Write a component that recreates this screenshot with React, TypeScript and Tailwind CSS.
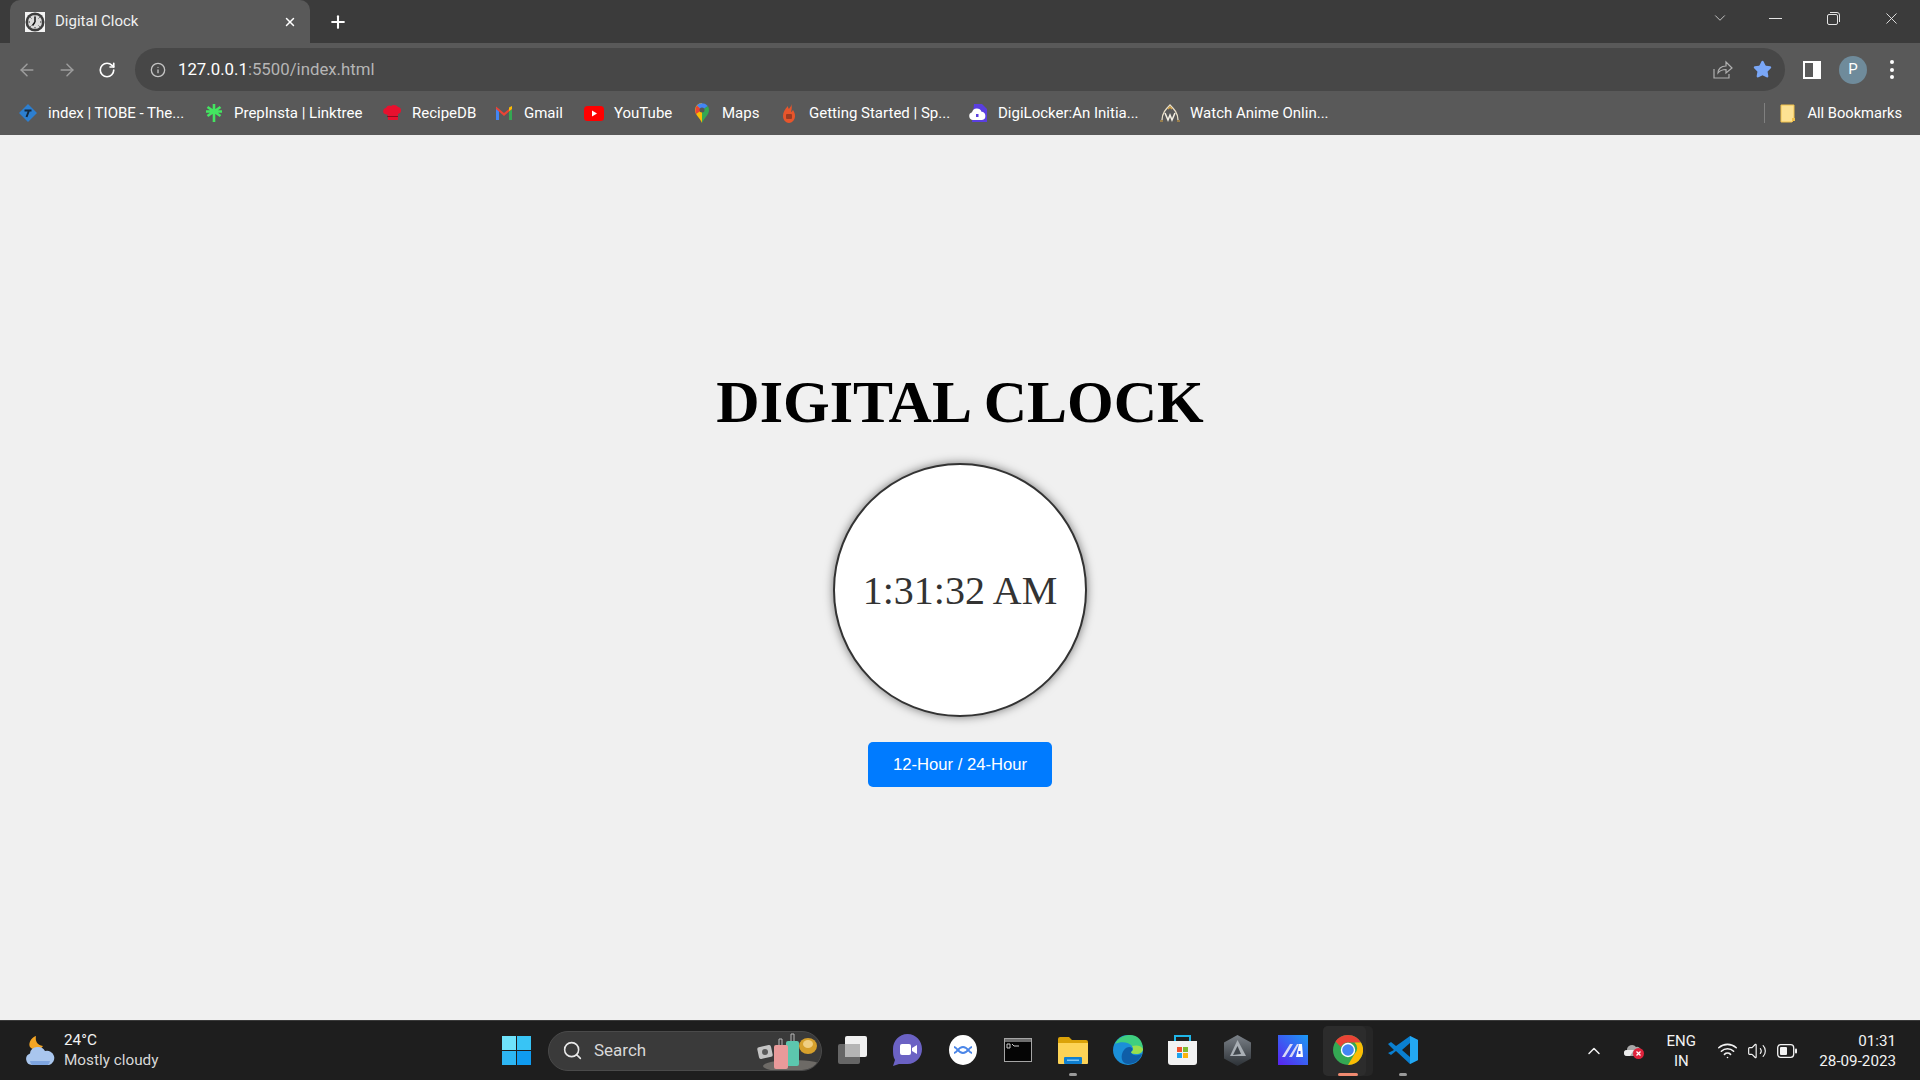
import React, { useState } from 'react';
import { ArrowLeft, ArrowRight, ChevronDown, ChevronUp, Info, Plus, RotateCw, Search, Star, Volume2, Wifi, X } from 'lucide-react';

const uiFont = "font-['Roboto',sans-serif]";

function Favicon() {
  return (
    <svg width="20" height="20" viewBox="0 0 20 20">
      <rect width="20" height="20" fill="#f4f4f4" />
      <circle cx="10" cy="10" r="9.500" fill="#3d3d3d" />
      <circle cx="10" cy="10" r="7" fill="#dcdcdc" />
      <path d="M10 10V5M10 10l-2.500 3.500" stroke="#111" strokeWidth="1.500" fill="none" />
      <path d="M10 3.500v1.500M10 15v1.500M3.500 10H5M15 10h1.500M5.400 5.400l1 1M13.600 13.600l1 1M14.600 5.400l-1 1M6.400 13.600l-1 1" stroke="#333" strokeWidth="1" />
    </svg>
  );
}

function TiobeIcon() {
  return (
    <svg width="20" height="20" viewBox="0 0 20 20">
      <path d="M10 1l9 9-9 9-9-9z" fill="#2d7fd0" />
      <path d="M6.500 7.500h7M11 7.500L8.500 14" stroke="#13283e" strokeWidth="2" fill="none" />
    </svg>
  );
}

function LinktreeIcon() {
  return (
    <svg width="18" height="20" viewBox="0 0 18 20">
      <path d="M9 1v18M2.500 4l13 9M15.500 4l-13 9M1 8.500h16" stroke="#43e660" strokeWidth="2.600" fill="none" />
    </svg>
  );
}

function RecipeIcon() {
  return (
    <svg width="20" height="18" viewBox="0 0 20 18">
      <path d="M4 4c1-3 4-3 5-2 2-2 6-1 7 1 3 0 4 4 2 6l-2 1v6H6v-5L3 10C0 9 1 4 4 4z" fill="#e8102e" />
      <path d="M5 12.500h11" stroke="#8d0a1e" strokeWidth="1" />
    </svg>
  );
}

function GmailIcon() {
  return (
    <svg width="18" height="16" viewBox="0 0 18 16">
      <path d="M1 3v12h3V6z" fill="#4285f4" />
      <path d="M14 6v9h3V3z" fill="#34a853" />
      <path d="M1 1.500L9 8l8-6.500V4l-8 7-8-7z" fill="#ea4335" />
      <path d="M14 2.500L17 1v3l-3 2z" fill="#fbbc04" />
    </svg>
  );
}

function YoutubeIcon() {
  return (
    <svg width="20" height="15" viewBox="0 0 20 15">
      <rect width="20" height="15" rx="3.500" fill="#f00" />
      <path d="M8 4.500l5 3-5 3z" fill="#fff" />
    </svg>
  );
}

function MapsIcon() {
  return (
    <svg width="14" height="20" viewBox="0 0 14 20">
      <path d="M7 20C5 15 0 12 0 7a7 7 0 0 1 7-7z" fill="#fbbc04" />
      <path d="M7 20c2-5 7-8 7-13 0-1.500-.5-3-1.300-4L7 7z" fill="#34a853" />
      <path d="M2 2.500L7 7 1 11C0 9 0 5 2 2.500z" fill="#ea4335" />
      <path d="M2 2.500C4 0 9-1 12.700 3L7 7z" fill="#4285f4" />
      <circle cx="7" cy="7" r="2.500" fill="#555" />
    </svg>
  );
}

function FireIcon() {
  return (
    <svg width="14" height="20" viewBox="0 0 14 20">
      <path d="M9 0c1 3-1 4-2 6C6 5 6 4 6 3 3 6 1 9 1 13c0 4 3 7 6 7s6-3 6-7c0-3-1-4-2-6-1 1-1 2-2 2 1-3 1-6 0-9z" fill="#e8552b" />
      <rect x="4" y="11" width="6" height="5" rx="1" fill="#9c3b22" />
    </svg>
  );
}

function DigiLockerIcon() {
  return (
    <svg width="20" height="20" viewBox="0 0 20 20">
      <path d="M6 1h8l5 5v13H4z" fill="#5a3fe0" />
      <path d="M5 17a4 4 0 0 1-1-7.800 5 5 0 0 1 9.500-.5A4.200 4.200 0 0 1 14 17z" fill="#fff" />
      <rect x="8" y="11" width="2.500" height="3" fill="#5a3fe0" />
    </svg>
  );
}

function AnimeIcon() {
  return (
    <svg width="20" height="20" viewBox="0 0 20 20" fill="none">
      <path d="M2 17C2 10 6 6 10 2c4 4 8 8 8 15" stroke="#e9dfc8" strokeWidth="1.300" />
      <path d="M5 10l3 7 2-5 2 5 3-7" stroke="#f4f0e4" strokeWidth="1.500" />
      <path d="M8 6l2-2 2 2" stroke="#d9a441" strokeWidth="1.300" />
      <path d="M0 18h3M17 18h3" stroke="#d9a441" strokeWidth="1" />
    </svg>
  );
}

function BookmarkFolder() {
  return (
    <svg width="16" height="19" viewBox="0 0 16 19">
      <path d="M1 1h13v15l-2 2H1z" fill="#fde293" stroke="#f0c14b" strokeWidth="1" />
      <path d="M12 14h3v3h-3z" fill="#f0c14b" />
    </svg>
  );
}

function ShareIcon() {
  return (
    <svg width="20" height="19" viewBox="0 0 20 19" fill="none" stroke="#b0b0b0" strokeWidth="1.200">
      <path d="M1 9v9h15v-4" />
      <path d="M5 13c0-4 3-7 8-7V2l6 6-6 5V9.500c-3 0-6 1-8 3.500z" />
    </svg>
  );
}

function SidePanelIcon() {
  return (
    <svg width="18" height="18" viewBox="0 0 18 18">
      <rect width="18" height="18" fill="#fff" />
      <rect x="2" y="2" width="8" height="14" fill="#595959" />
    </svg>
  );
}

function RestoreIcon() {
  return (
    <svg width="13" height="13" viewBox="0 0 13 13" fill="none" stroke="#e4e4e4" strokeWidth="1">
      <rect x="0.500" y="2.500" width="10" height="10" rx="1.500" />
      <path d="M3 .5h7a2.500 2.500 0 0 1 2.500 2.500v7" />
    </svg>
  );
}

function WeatherIcon() {
  return (
    <svg width="30" height="30" viewBox="0 0 30 30">
      <path d="M11 0c-1 5 1 9 7 10-2 4-8 5-12 2C2 9 6 1 11 0z" fill="#f4a524" />
      <path d="M7 29a6 6 0 0 1-2-11.600 7 7 0 0 1 7-6.400 8 8 0 0 1 8 4 7 7 0 0 1 4 14z" fill="#a9c6ee" />
      <path d="M5 25h20a7 7 0 0 1-2 4H7a6 6 0 0 1-2-4z" fill="#7ea5e0" />
    </svg>
  );
}

function StartIcon() {
  return (
    <svg width="29" height="29" viewBox="0 0 29 29">
      <rect width="14" height="14" fill="#6fe3fb" />
      <rect x="15" width="14" height="14" fill="#38c4f5" />
      <rect y="15" width="14" height="14" fill="#2db6f4" />
      <rect x="15" y="15" width="14" height="14" fill="#0f9bf0" />
    </svg>
  );
}

function SearchArt() {
  return (
    <svg width="64" height="40" viewBox="0 0 64 40">
      <ellipse cx="36" cy="35" rx="30" ry="6" fill="#6d6a66" />
      <rect x="1" y="15" width="14" height="12" rx="2" fill="#c4c4c4" transform="rotate(-12 8 21)" />
      <circle cx="8" cy="21" r="3" fill="#5a5a5a" />
      <path d="M22 15V8h3v7M34 11V3h3v8" fill="none" stroke="#b8b8b8" strokeWidth="1" />
      <rect x="29" y="10" width="13" height="25" rx="2" fill="#5cc7ae" />
      <rect x="17" y="14" width="14" height="24" rx="2" fill="#e99a9a" />
      <ellipse cx="51" cy="15" rx="9" ry="8" fill="#d6a02c" />
      <ellipse cx="51" cy="13" rx="5" ry="4" fill="#f0cf82" />
    </svg>
  );
}

function TaskViewIcon() {
  return (
    <svg width="30" height="28" viewBox="0 0 30 28">
      <rect x="0" y="8" width="22" height="20" rx="2" fill="#666" />
      <rect x="7" y="0" width="22" height="21" rx="2" fill="#f0f0f0" />
      <rect x="7" y="8" width="15" height="13" fill="#b5b5b5" />
    </svg>
  );
}

function MeetIcon() {
  return (
    <svg width="29" height="32" viewBox="0 0 29 32">
      <path d="M14.500 0C23 0 29 7 29 15s-6 15-14.500 15H6l-6 2 2-6C0 23 0 19 0 15 0 7 6 0 14.500 0z" fill="#6b62c4" />
      <rect x="7" y="10" width="11" height="11" rx="2" fill="#fff" />
      <path d="M19 14l5-3v9l-5-3z" fill="#fff" />
    </svg>
  );
}

function CircleWaveIcon() {
  return (
    <svg width="28" height="30" viewBox="0 0 28 30" fill="none">
      <ellipse cx="14" cy="15" rx="14" ry="15" fill="#fff" />
      <path d="M5 12c3 0 4 6 9 6s6-6 9-6M5 18c3 0 4-6 9-6s6 6 9 6" stroke="#4b86e8" strokeWidth="1.800" />
    </svg>
  );
}

function TerminalIcon() {
  return (
    <svg width="28" height="24" viewBox="0 0 28 24">
      <rect width="28" height="24" fill="#a5a5a5" />
      <rect x="1" y="1" width="26" height="3" fill="#6e6e6e" />
      <rect x="1" y="4" width="26" height="19" fill="#050505" />
      <path d="M3 6h3v4H3zM8 6l2 2h5" stroke="#ccc" strokeWidth="1" fill="none" />
    </svg>
  );
}

function FolderIcon() {
  return (
    <svg width="30" height="27" viewBox="0 0 30 27">
      <path d="M0 2a2 2 0 0 1 2-2h9l3 3h14a2 2 0 0 1 2 2v6H0z" fill="#dba208" />
      <path d="M0 6h30v20a1 1 0 0 1-1 1H1a1 1 0 0 1-1-1z" fill="#fdd356" />
      <rect x="6" y="20" width="18" height="7" rx="1" fill="#0f7fd0" />
      <rect x="9" y="22.500" width="12" height="1.500" fill="#7cc5f5" />
    </svg>
  );
}

function EdgeIcon() {
  return (
    <svg width="30" height="30" viewBox="0 0 30 30">
      <circle cx="15" cy="15" r="15" fill="#1b8fd8" />
      <path d="M2 9C5 2 12 0 17 0c8 0 13 6 13 14 0 3-3 5-7 5-3 0-5-1-5-2 2-1 3-3 1-6C16 7 8 6 2 9z" fill="#3fcf7f" />
      <path d="M15 29C8 29 7 20 11 15c2-3 6-4 8-2 1 2 0 4-1 4 0 2 4 4 7 3 2 0 3-1 4-1-2 6-7 10-14 10z" fill="#0f5ea8" />
      <path d="M30 14c0 3-3 5-7 5-3 0-5-1-5-2 2-1 3-3 1-6 4-1 9-1 11 3z" fill="#9ade4e" />
    </svg>
  );
}

function StoreIcon() {
  return (
    <svg width="29" height="30" viewBox="0 0 29 30">
      <path d="M7 6V1h15v5" fill="none" stroke="#1fb6e8" strokeWidth="2" />
      <path d="M0 6h29v21a3 3 0 0 1-3 3H3a3 3 0 0 1-3-3z" fill="#f2f2f2" />
      <rect x="9" y="12" width="5" height="5" fill="#f0532d" />
      <rect x="15" y="12" width="5" height="5" fill="#7fbb2e" />
      <rect x="9" y="18" width="5" height="5" fill="#1ea4ee" />
      <rect x="15" y="18" width="5" height="5" fill="#fbb40d" />
    </svg>
  );
}

function HexIcon() {
  return (
    <svg width="27" height="31" viewBox="0 0 27 31">
      <defs>
        <linearGradient id="hexFill" x1="0" y1="0" x2="0" y2="1">
          <stop offset="0" stopColor="#7b8188" />
          <stop offset="1" stopColor="#2c3136" />
        </linearGradient>
      </defs>
      <path d="M13.500 0L27 7.500v16L13.500 31 0 23.500v-16z" fill="url(#hexFill)" />
      <path d="M13.500 5L22 21H6z" fill="#a9afb5" />
      <path d="M13.500 11L17 19l-8 1z" fill="#41474d" />
    </svg>
  );
}

function BlueAppIcon() {
  return (
    <svg width="30" height="30" viewBox="0 0 30 30">
      <defs>
        <linearGradient id="blueApp" x1="1" y1="0" x2="0" y2="1">
          <stop offset="0" stopColor="#1a9bf5" />
          <stop offset="1" stopColor="#5a22ef" />
        </linearGradient>
      </defs>
      <rect width="30" height="30" fill="url(#blueApp)" />
      <path d="M4 22L12 9h3L7 22zM11 22L19 9h2L14 22z" fill="#d8d8f5" />
      <path d="M21 9h3l1 13h-7z" fill="#fff" />
      <rect x="20.500" y="16" width="2" height="3" fill="#3a4ff0" />
    </svg>
  );
}

function ChromeIcon() {
  return (
    <svg width="30" height="30" viewBox="0 0 30 30">
      <circle cx="15" cy="15" r="15" fill="#34a853" />
      <path d="M15 0a15 15 0 0 1 13 7.500H15a7.500 7.500 0 0 0-7 4.500L2.500 6.500A15 15 0 0 1 15 0z" fill="#ea4335" />
      <path d="M28 7.500A15 15 0 0 1 15 30l6.500-11a7.500 7.500 0 0 0 0-11.500z" fill="#fbbc04" />
      <circle cx="15" cy="15" r="7.200" fill="#fff" />
      <circle cx="15" cy="15" r="5.800" fill="#4285f4" />
    </svg>
  );
}

function VsCodeIcon() {
  return (
    <svg width="30" height="30" viewBox="0 0 30 30">
      <path d="M22 1l8 4v20l-8 4L8 16l-5 4-3-2 6-3-6-6 3-2 5 4z" fill="#0a7fd0" />
      <path d="M22 1l8 4v20l-8 4z" fill="#23a8f2" />
      <path d="M22 8l-8 7 8 7z" fill="#1e1e1e" />
    </svg>
  );
}

function OneDriveOff() {
  return (
    <svg width="20" height="16" viewBox="0 0 20 16">
      <path d="M3 13a3 3 0 0 1 0-6 5 5 0 0 1 9-3 4 4 0 0 1 5 4v5z" fill="#a8a8a8" />
      <path d="M3 13a3 3 0 0 1 0-6h7l-4 6z" fill="#ececec" />
      <circle cx="14.500" cy="10.500" r="5.500" fill="#e0233c" />
      <path d="M12.500 8.500l4 4M16.500 8.500l-4 4" stroke="#fff" strokeWidth="1.300" />
    </svg>
  );
}

function BatteryIcon() {
  return (
    <svg width="20" height="14" viewBox="0 0 20 14">
      <rect x="0.700" y="0.700" width="16" height="12.600" rx="3" fill="none" stroke="#f2f2f2" strokeWidth="1.300" />
      <rect x="3" y="3" width="7" height="8" rx="1" fill="#f2f2f2" />
      <rect x="18" y="4.500" width="2" height="5" rx="1" fill="#f2f2f2" />
    </svg>
  );
}

const bookmarks = [
  { icon: <TiobeIcon />, label: 'index | TIOBE - The...', w: 'w-[156px]' },
  { icon: <LinktreeIcon />, label: 'PrepInsta | Linktree', w: 'w-[148px]' },
  { icon: <RecipeIcon />, label: 'RecipeDB', w: 'w-[82px]' },
  { icon: <GmailIcon />, label: 'Gmail', w: 'w-[60px]' },
  { icon: <YoutubeIcon />, label: 'YouTube', w: 'w-[78px]' },
  { icon: <MapsIcon />, label: 'Maps', w: 'w-[57px]' },
  { icon: <FireIcon />, label: 'Getting Started | Sp...', w: 'w-[159px]' },
  { icon: <DigiLockerIcon />, label: 'DigiLocker:An Initia...', w: 'w-[162px]' },
  { icon: <AnimeIcon />, label: 'Watch Anime Onlin...', w: 'w-[150px]' },
];

const taskIcons = [
  { icon: <TaskViewIcon /> },
  { icon: <MeetIcon /> },
  { icon: <CircleWaveIcon /> },
  { icon: <TerminalIcon /> },
  { icon: <FolderIcon />, dot: 'w-[8px] bg-[#9a9a9a]' },
  { icon: <EdgeIcon /> },
  { icon: <StoreIcon /> },
  { icon: <HexIcon /> },
  { icon: <BlueAppIcon /> },
  { icon: <ChromeIcon />, dot: 'w-[20px] bg-[#f08a70]', active: true },
  { icon: <VsCodeIcon />, dot: 'w-[8px] bg-[#9a9a9a]' },
];

function TabStrip() {
  return (
    <div className="flex h-[43px] items-end bg-[#3b3b3b]">
      <div className="ml-[10px] flex h-[43px] w-[300px] items-center rounded-t-[10px] bg-[#595959] pl-[15px] pr-[13px]">
        <Favicon />
        <span className="ml-[10px] text-[15px] text-[#f0f0f0]">Digital Clock</span>
        <X className="ml-auto text-white" size={14} strokeWidth={2.500} />
      </div>
      <div className="ml-[18px] flex h-[43px] items-center">
        <Plus className="text-white" size={20} strokeWidth={2.500} />
      </div>
      <div className="ml-auto flex h-[43px] items-center pb-[7px] pr-[19px] text-[#e4e4e4]">
        <ChevronDown size={18} strokeWidth={1.200} className="text-[#cfcfcf]" />
        <div className="ml-[40px] h-px w-[13px] bg-[#e4e4e4]" />
        <div className="ml-[45px]">
          <RestoreIcon />
        </div>
        <X className="ml-[42px]" size={19} strokeWidth={1.200} />
      </div>
    </div>
  );
}

function Toolbar() {
  return (
    <div className={`flex h-[48px] items-end bg-[#595959] pb-0 ${uiFont}`}>
      <div className="flex h-[43px] w-[135px] items-center pl-[17px]">
        <ArrowLeft className="text-[#9d9d9d]" size={20} strokeWidth={1.800} />
        <ArrowRight className="ml-[20px] text-[#9d9d9d]" size={20} strokeWidth={1.800} />
        <RotateCw className="ml-[21px] text-white" size={18} strokeWidth={2.200} />
      </div>
      <div className="flex h-[43px] w-[1650px] items-center rounded-full bg-[#474747] pl-[15px] pr-[13px]">
        <Info className="text-[#c4c4c4]" size={16} strokeWidth={2} />
        <span className="ml-[12px] text-[16.800px] text-white">
          127.0.0.1<span className="text-[#b5b5b5]">:5500/index.html</span>
        </span>
        <div className="ml-auto flex items-center">
          <ShareIcon />
          <Star className="ml-[20px] fill-[#7aa7f7] text-[#7aa7f7]" size={19} />
        </div>
      </div>
      <div className="flex h-[43px] items-center">
        <div className="ml-[18px]">
          <SidePanelIcon />
        </div>
        <div className="ml-[18px] flex h-[28px] w-[28px] items-center justify-center rounded-full bg-[#6f8b9b] text-[15px] text-white">
          P
        </div>
        <div className="ml-[23px] flex flex-col gap-[3.500px]">
          <div className="h-[4px] w-[4px] rounded-full bg-white" />
          <div className="h-[4px] w-[4px] rounded-full bg-white" />
          <div className="h-[4px] w-[4px] rounded-full bg-white" />
        </div>
      </div>
    </div>
  );
}

function BookmarksBar() {
  return (
    <div className={`flex h-[44px] items-center bg-[#595959] pl-[18px] pr-[18px] text-[15px] text-white ${uiFont}`}>
      {bookmarks.map((b) => (
        <div key={b.label} className="flex items-center">
          <div className="flex w-[20px] justify-center">{b.icon}</div>
          <span className={`ml-[10px] whitespace-nowrap ${b.w}`}>{b.label}</span>
        </div>
      ))}
      <div className="ml-auto h-[20px] w-px bg-[#808080]" />
      <div className="ml-[15px]">
        <BookmarkFolder />
      </div>
      <span className="ml-[11px] whitespace-nowrap text-[14.700px]">All Bookmarks</span>
    </div>
  );
}

function Clock() {
  const [use24, setUse24] = useState(false);
  return (
    <main className="flex h-[885px] flex-col items-center bg-[#f0f0f0] pt-[233px] font-['Liberation_Serif',serif]">
      <h1 className="text-[60px] leading-[69px] font-bold text-black">DIGITAL CLOCK</h1>
      <div className="mt-[26px] flex h-[254px] w-[254px] items-center justify-center rounded-full border-2 border-[#333] bg-white shadow-[0_0_10px_rgba(0,0,0,0.5)]">
        <span className="mt-[2px] text-[40px] text-[#333]">{use24 ? '01:31:32' : '1:31:32 AM'}</span>
      </div>
      <button
        onClick={() => setUse24(!use24)}
        className="mt-[25px] h-[45px] w-[184px] rounded-[5px] bg-[#007bff] font-['Liberation_Sans',sans-serif] text-[16.670px] text-white"
      >
        12-Hour / 24-Hour
      </button>
    </main>
  );
}

function Taskbar() {
  return (
    <footer className={`flex h-[60px] items-center border-t border-[#3a3a3a] bg-[#1e1e1e] text-[#f2f2f2] ${uiFont}`}>
      <div className="flex w-[490px] items-center pl-[25px]">
        <WeatherIcon />
        <div className="mb-[2px] ml-[9px] flex flex-col text-[15.300px] leading-[20px]">
          <span>24°C</span>
          <span className="text-[#d8d8d8]">Mostly cloudy</span>
        </div>
      </div>
      <div className="flex w-[53px] justify-center">
        <StartIcon />
      </div>
      <div className="ml-[5px] flex h-[40px] w-[274px] items-center overflow-hidden rounded-full border border-[#4a4a4a] bg-[#3a3a3a] pl-[13px]">
        <Search className="text-[#e8e8e8]" size={21} strokeWidth={1.800} />
        <span className="ml-[11px] text-[17px] text-[#d8d8d8]">Search</span>
        <div className="ml-auto">
          <SearchArt />
        </div>
      </div>
      <div className="ml-[3px] flex">
        {taskIcons.map((t, i) => (
          <div key={i} className="relative flex h-[50px] w-[55px] items-center justify-center">
            {t.active && <div className="absolute left-[3px] h-[50px] w-[50px] rounded-[5px] bg-[#262626]" />}
            {t.active && <div className="absolute left-[3px] h-[50px] w-[43px] rounded-[5px] bg-[#2c2c2c]" />}
            <div className="relative mb-[1px]">{t.icon}</div>
            {t.dot && <div className={`absolute bottom-0 h-[3px] rounded-full ${t.dot}`} />}
          </div>
        ))}
      </div>
      <div className="ml-auto flex items-center pr-[24px]">
        <ChevronUp className="text-[#f2f2f2]" size={20} strokeWidth={1.800} />
        <div className="ml-[20px]">
          <OneDriveOff />
        </div>
        <div className="ml-[22px] flex w-[30px] flex-col items-center text-[15px] leading-[20px]">
          <span>ENG</span>
          <span>IN</span>
        </div>
        <Wifi className="ml-[21px]" size={21} strokeWidth={1.800} />
        <Volume2 className="ml-[9px]" size={20} strokeWidth={1.400} />
        <div className="ml-[10px]">
          <BatteryIcon />
        </div>
        <div className="ml-[22px] flex flex-col items-end text-[15.200px] leading-[20px]">
          <span>01:31</span>
          <span>28-09-2023</span>
        </div>
      </div>
    </footer>
  );
}

export default function App() {
  return (
    <div className="h-[1080px] w-[1920px] overflow-hidden">
      <div className={uiFont}>
        <TabStrip />
      </div>
      <Toolbar />
      <BookmarksBar />
      <Clock />
      <Taskbar />
    </div>
  );
}
